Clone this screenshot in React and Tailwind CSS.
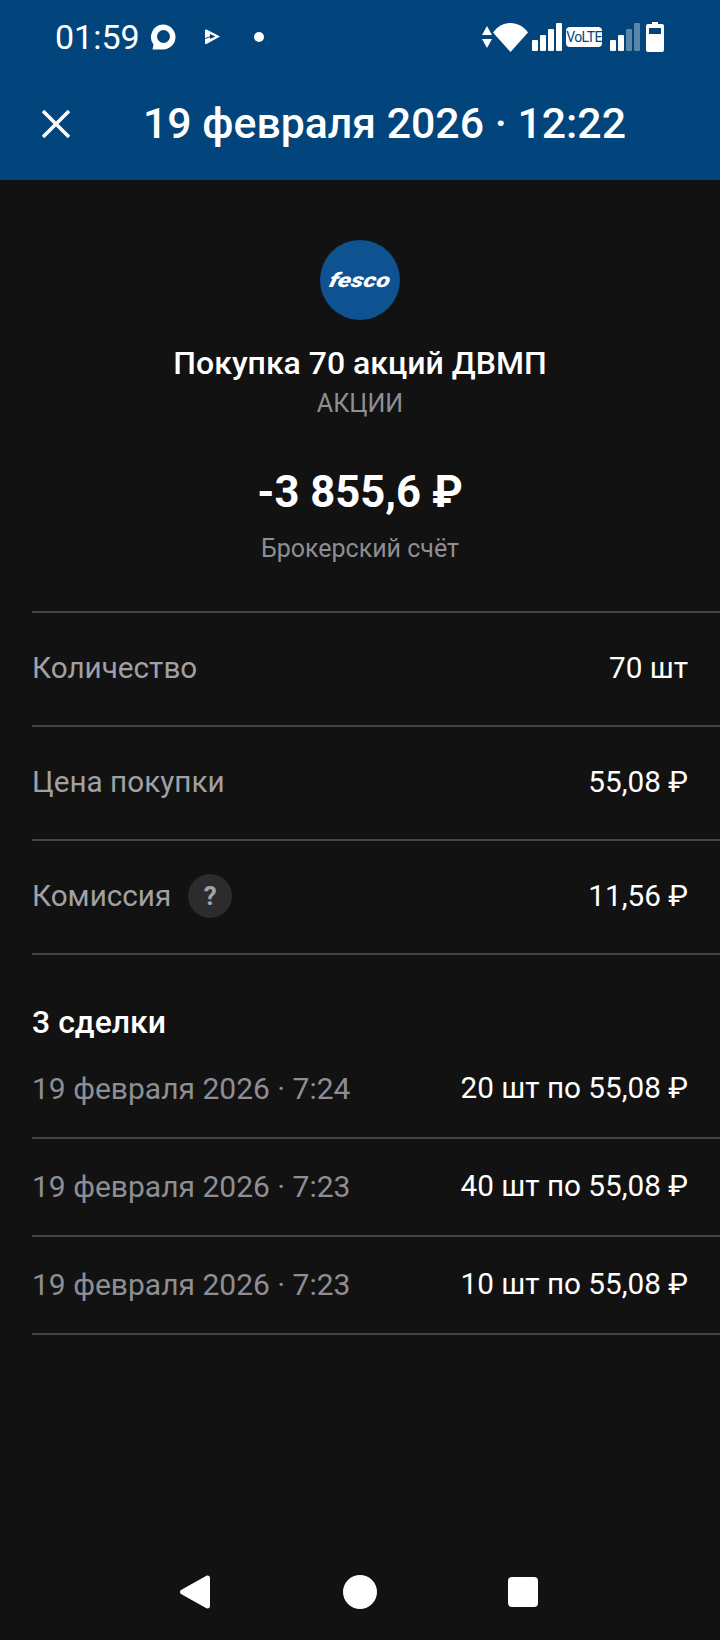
const Row = ({ label, value, hint }) => (
  <div className="h-[114px] pb-[1px] flex items-center justify-between pr-8 border-b-2 border-[#444446]">
    <div className="flex items-center text-[29.700px] text-[#a0a0a5]">
      <span>{label}</span>
      {hint && (
        <span className="ml-[17px] w-11 h-11 rounded-full bg-[#2c2c2e] flex items-center justify-center text-[26px] font-bold text-[#a3a3a8]">?</span>
      )}
    </div>
    <span className="text-[29.700px] text-white">{value}</span>
  </div>
)

const Deal = ({ date, value }) => (
  <div className="h-[98px] pb-[1px] flex items-center justify-between pr-8 border-b-2 border-[#444446]">
    <span className="text-[30px] text-[#8e8e93]">{date}</span>
    <span className="text-[29.700px] text-white">{value}</span>
  </div>
)

const StatusLeft = () => (
  <div className="flex items-center">
    <span className="text-[34px] text-white leading-none">01:59</span>
    <svg className="ml-[10px] w-[26px] h-[26px]" viewBox="0 0 26 26">
      <path d="M13 0.5a12.5 12.5 0 0 1 0 25H2.5l1-5A12.5 12.5 0 0 1 13 0.5z" fill="#fff" />
      <circle cx="13.5" cy="12.5" r="6.5" fill="#02457c" />
    </svg>
    <svg className="ml-[29px] w-4 h-4" viewBox="0 0 16 16">
      <path d="M0 1.500Q0 0 1.500.6L15 7.500 1.500 15Q0 15.500 0 14z" fill="#fff" />
      <path d="M5 5l5.500 2.500L5 10z" fill="#02457c" />
      <path d="M0 9.500 6 7.500" stroke="#02457c" strokeWidth="1" />
    </svg>
    <span className="ml-[33px] w-[10px] h-[10px] rounded-full bg-white" />
  </div>
)

const StatusRight = () => (
  <div className="flex items-center">
    <svg className="w-[10px] h-[23px]" viewBox="0 0 10 23">
      <path d="M5 0l5 9H0zM0 13h10l-5 9z" fill="#fff" />
    </svg>
    <svg className="ml-[1px] w-[35px] h-[29px]" viewBox="0 0 35 29">
      <path d="M0 9.500C4.500 3.500 10.500 0 17.500 0S30.500 3.500 35 9.500L17.500 29z" fill="#fff" />
    </svg>
    <svg className="ml-1 w-[30px] h-[28px]" viewBox="0 0 30 28">
      <rect x="0" y="17" width="6" height="11" rx="1" fill="#fff" />
      <rect x="8" y="12" width="6" height="16" rx="1" fill="#fff" />
      <rect x="16" y="6" width="6" height="22" rx="1" fill="#fff" />
      <rect x="24" y="0" width="6" height="28" rx="1" fill="#fff" />
    </svg>
    <span className="ml-1 w-9 h-5 rounded-[4px] bg-white text-[#02457c] text-[14px] leading-5 text-center tracking-[-0.6px] whitespace-nowrap">VoLTE</span>
    <svg className="ml-2 w-[30px] h-[28px]" viewBox="0 0 30 28">
      <rect x="0" y="17" width="6" height="11" rx="1" fill="#fff" />
      <rect x="8" y="12" width="6" height="16" rx="1" fill="#fff" />
      <rect x="16" y="6" width="6" height="22" rx="1" fill="#fff" fillOpacity="0.35" />
      <rect x="24" y="0" width="6" height="28" rx="1" fill="#fff" fillOpacity="0.35" />
    </svg>
    <svg className="ml-[6px] w-[18px] h-[30px]" viewBox="0 0 18 30">
      <path d="M6 0h6v2h4a2 2 0 0 1 2 2v24a2 2 0 0 1-2 2H2a2 2 0 0 1-2-2V4a2 2 0 0 1 2-2h4z" fill="#fff" />
      <rect x="3" y="6" width="12" height="6" fill="#02457c" />
    </svg>
  </div>
)

const App = () => {
  return (
    <div className="w-[720px] h-[1640px] flex flex-col bg-[#121212] font-['Roboto',sans-serif] overflow-hidden">
      <header className="h-[180px] bg-[#02457c] shrink-0">
        <div className="h-[74px] pl-[55px] pr-14 flex items-center justify-between">
          <StatusLeft />
          <StatusRight />
        </div>
        <div className="h-[98px] relative flex items-center justify-center">
          <svg className="absolute left-[42px] top-[36px] w-[28px] h-[28px]" viewBox="0 0 28 28">
            <path d="M1 1l26 26M27 1 1 27" stroke="#fff" strokeWidth="3.500" fill="none" />
          </svg>
          <h1 className="pl-[49px] text-[42.800px] font-medium text-white leading-none">19 февраля 2026 · 12:22</h1>
        </div>
      </header>

      <main className="flex-1 flex flex-col">
        <div className="h-[431px] flex flex-col items-center pt-[60px]">
          <div className="w-20 h-20 rounded-full bg-[#0f5291] flex items-center justify-center">
            <span className="text-[20px] font-black italic text-white leading-none scale-x-[1.25] -skew-x-12">fesco</span>
          </div>
          <div className="mt-[23px] text-[32px] font-medium text-white leading-10">Покупка 70 акций ДВМП</div>
          <div className="mt-[5px] text-[25px] text-[#8e8e93] leading-8">АКЦИИ</div>
          <div className="mt-[51px] text-[43.600px] font-bold text-white leading-none">-3 855,6 ₽</div>
          <div className="mt-[18px] text-[25px] text-[#8e8e93] leading-8">Брокерский счёт</div>
        </div>

        <div className="ml-8 border-t-2 border-[#444446]">
          <Row label="Количество" value="70 шт" />
          <Row label="Цена покупки" value="55,08 ₽" />
          <Row label="Комиссия" value="11,56 ₽" hint />
        </div>

        <div className="ml-8">
          <div className="h-[86px] pt-[49px] text-[32px] font-medium text-white leading-9">3 сделки</div>
          <Deal date="19 февраля 2026 · 7:24" value="20 шт по 55,08 ₽" />
          <Deal date="19 февраля 2026 · 7:23" value="40 шт по 55,08 ₽" />
          <Deal date="19 февраля 2026 · 7:23" value="10 шт по 55,08 ₽" />
        </div>

        <nav className="mt-auto h-[96px] flex items-center">
          <div className="ml-[180px] flex items-center">
            <svg className="w-[30px] h-[34px]" viewBox="0 0 30 34">
              <path d="M1 15 26 1c2-1 4 0 4 2v28c0 2-2 3-4 2L1 19c-1.300-.8-1.300-3.200 0-4z" fill="#fff" />
            </svg>
            <span className="ml-[133px] w-[34px] h-[34px] rounded-full bg-white" />
            <span className="ml-[131px] w-[30px] h-[30px] rounded-[4px] bg-white" />
          </div>
        </nav>
      </main>
    </div>
  )
}

export default App
